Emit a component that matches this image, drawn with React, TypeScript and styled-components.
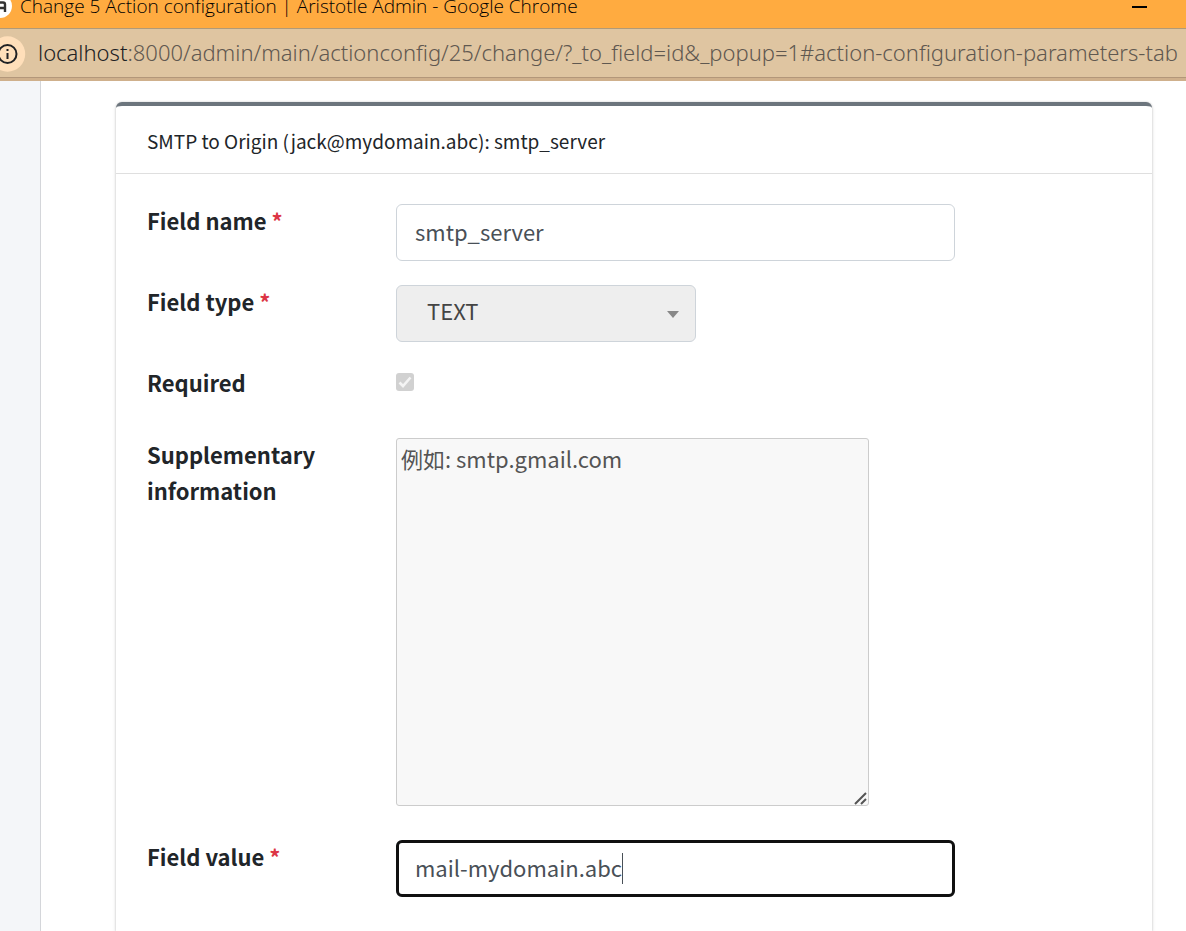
import React from "react";
import styled, { createGlobalStyle } from "styled-components";

const GlobalStyle = createGlobalStyle`
  *, *::before, *::after { box-sizing: border-box; }
  body {
    margin: 0;
    background: #fff;
    color: #212529;
    font-family: "Noto Sans CJK TC", "Noto Sans", sans-serif;
    font-size: 22px;
    line-height: 36px;
  }
`;

const Page = styled.div`
  display: flex;
  flex-direction: column;
  min-height: 100vh;
  overflow: hidden;
`;

const TitleBar = styled.header`
  display: flex;
  justify-content: space-between;
  height: 29px;
  background: #ffab40;
  border-bottom: 1px solid #b19a78;
  color: #000;
  font-family: "Open Sans", sans-serif;
  font-size: 19px;
  font-weight: 300;
  line-height: 12px;
`;

const TitleGroup = styled.div`
  display: flex;
  gap: 8px;
  white-space: nowrap;
`;

const MinimizeButton = styled.button`
  display: flex;
  width: 94px;
  height: 16px;
  padding: 6px 0 0 40px;
  border: 0;
  background: none;
`;

const AddressBar = styled.div`
  display: flex;
  align-items: center;
  gap: 12px;
  height: 52px;
  overflow: hidden;
  background: #dfc5a1;
  border-bottom: 3px solid #cfb08c;
  box-shadow: inset 0 -1px 0 #b3977a;
  color: #5f5850;
  font-family: "Noto Sans", sans-serif;
  font-size: 22px;
  font-weight: 300;
  white-space: nowrap;
`;

const Address = styled.span`
  padding-bottom: 3px;
`;

const Host = styled.span`
  color: #202124;
`;

const InfoButton = styled.button`
  display: flex;
  flex: none;
  padding: 0;
  border: 0;
  background: none;
`;

const Body = styled.div`
  display: flex;
  flex: 1;
`;

const Sidebar = styled.aside`
  flex: none;
  width: 41px;
  background: #f4f6f9;
  border-right: 1px solid #d4d6da;
`;

const Main = styled.main`
  display: flex;
  flex: 1;
  min-width: 0;
  padding: 21px 34px 0 75px;
`;

const Card = styled.section`
  flex: 1;
  min-width: 0;
  background: #fff;
  border-top: 4px solid #6c757d;
  border-radius: 6px 6px 0 0;
  box-shadow: 0 0 2px rgba(0, 0, 0, 0.22), 0 2px 4px rgba(0, 0, 0, 0.12);
`;

const CardTitle = styled.h1`
  margin: 0;
  padding: 20px 31px 17px;
  border-bottom: 1px solid #dfdfdf;
  font-size: 19px;
  font-weight: 400;
  line-height: 30px;
`;

const Form = styled.form`
  display: flex;
  flex-direction: column;
  gap: 24px;
  padding: 30px 31px 24px;
`;

const Row = styled.div<{ $space?: number }>`
  display: grid;
  grid-template-columns: 249px minmax(0, 1fr);
  align-items: start;
  padding-bottom: ${(p) => p.$space ?? 0}px;
`;

const Label = styled.label`
  margin-top: -2px;
  padding-right: 40px;
  font-weight: 700;
`;

const Star = styled.span`
  color: #dc3545;
`;

const Field = styled.div<{ $width: number }>`
  position: relative;
  display: flex;
  width: ${(p) => p.$width}px;
  max-width: 100%;
`;

const TextInput = styled.input<{ $active?: boolean }>`
  width: 100%;
  height: 57px;
  padding: 0 18px 4px;
  border: 1px solid #ced4da;
  border-radius: 6px;
  outline: ${(p) => (p.$active ? "3px solid #101010" : "none")};
  outline-offset: -3px;
  background: #fff;
  color: #495057;
  font: inherit;
`;

const Caret = styled.span`
  position: absolute;
  top: 13px;
  left: 226px;
  width: 1px;
  height: 31px;
  background: #495057;
`;

const Select = styled.select`
  width: 100%;
  height: 57px;
  padding: 0 40px 8px 30px;
  border: 1px solid #ced4da;
  border-radius: 6px;
  appearance: none;
  background: #eee;
  color: #444;
  font: inherit;
  opacity: 1;
`;

const Arrow = styled.svg`
  position: absolute;
  top: 26px;
  right: 17px;
`;

const CheckField = styled.div`
  position: relative;
  display: flex;
  width: 18px;
  margin-top: 7px;
`;

const Checkbox = styled.input`
  width: 18px;
  height: 18px;
  margin: 0;
  appearance: none;
  border-radius: 3px;
  background: #d1d1d1;
`;

const Tick = styled.svg`
  position: absolute;
  inset: 0;
`;

const TextArea = styled.textarea`
  width: 100%;
  height: 368px;
  padding: 1px 4px;
  border: 1px solid #ccc;
  border-radius: 3px;
  resize: none;
  background: #f8f8f8;
  color: #545454;
  font: inherit;
`;

const Grip = styled.svg`
  position: absolute;
  right: 2px;
  bottom: 1px;
`;

export default function App() {
  return (
    <>
      <GlobalStyle />
      <Page>
        <TitleBar>
          <TitleGroup>
            <svg width="12" height="18" viewBox="0 0 12 18" aria-hidden="true">
              <circle cx="0" cy="6" r="12" fill="#fff" />
              <path d="M0 2.5H3Q5 2.5 5 4.5V12M0 8H5" fill="none" stroke="#333" strokeWidth="2.4" />
            </svg>
            <span>Change 5 Action configuration | Aristotle Admin - Google Chrome</span>
          </TitleGroup>
          <MinimizeButton type="button" aria-label="Minimize">
            <svg width="15" height="2" viewBox="0 0 15 2">
              <path d="M0 1H15" stroke="#000" strokeWidth="2" />
            </svg>
          </MinimizeButton>
        </TitleBar>
        <AddressBar>
          <InfoButton type="button" aria-label="Site information">
            <svg width="26" height="36" viewBox="0 0 26 36">
              <circle cx="7.5" cy="18" r="17.7" fill="#ffdfba" />
              <circle cx="7.5" cy="18" r="9" fill="none" stroke="#202124" strokeWidth="2" />
              <path d="M7.5 17V23M7.5 13V15" stroke="#202124" strokeWidth="2" />
            </svg>
          </InfoButton>
          <Address>
            <Host>localhost</Host>
            :8000/admin/main/actionconfig/25/change/?_to_field=id&amp;_popup=1#action-configuration-parameters-tab
          </Address>
        </AddressBar>
        <Body>
          <Sidebar />
          <Main>
            <Card>
              <CardTitle>SMTP to Origin (jack@mydomain.abc): smtp_server</CardTitle>
              <Form>
                <Row>
                  <Label htmlFor="field-name">
                    Field name <Star>*</Star>
                  </Label>
                  <Field $width={559}>
                    <TextInput id="field-name" defaultValue="smtp_server" />
                  </Field>
                </Row>
                <Row>
                  <Label htmlFor="field-type">
                    Field type <Star>*</Star>
                  </Label>
                  <Field $width={300}>
                    <Select id="field-type" disabled>
                      <option>TEXT</option>
                    </Select>
                    <Arrow width="12" height="7" viewBox="0 0 12 7" aria-hidden="true">
                      <path d="M0 0H12L6 7Z" fill="#888" />
                    </Arrow>
                  </Field>
                </Row>
                <Row $space={14}>
                  <Label htmlFor="required">Required</Label>
                  <CheckField>
                    <Checkbox id="required" type="checkbox" defaultChecked disabled />
                    <Tick width="18" height="18" viewBox="0 0 18 18" aria-hidden="true">
                      <path d="M3.5 9.5L7 13L14.5 4.5" fill="none" stroke="#f4f4f4" strokeWidth="2.6" />
                    </Tick>
                  </CheckField>
                </Row>
                <Row $space={10}>
                  <Label htmlFor="supplementary">Supplementary information</Label>
                  <Field $width={473}>
                    <TextArea id="supplementary" disabled defaultValue="例如: smtp.gmail.com" />
                    <Grip width="13" height="13" viewBox="0 0 13 13" aria-hidden="true">
                      <path d="M1 12L12 1M7 12L12 7" stroke="#555" strokeWidth="2" />
                    </Grip>
                  </Field>
                </Row>
                <Row>
                  <Label htmlFor="field-value">
                    Field value <Star>*</Star>
                  </Label>
                  <Field $width={559}>
                    <TextInput id="field-value" $active defaultValue="mail-mydomain.abc" />
                    <Caret />
                  </Field>
                </Row>
              </Form>
            </Card>
          </Main>
        </Body>
      </Page>
    </>
  );
}
